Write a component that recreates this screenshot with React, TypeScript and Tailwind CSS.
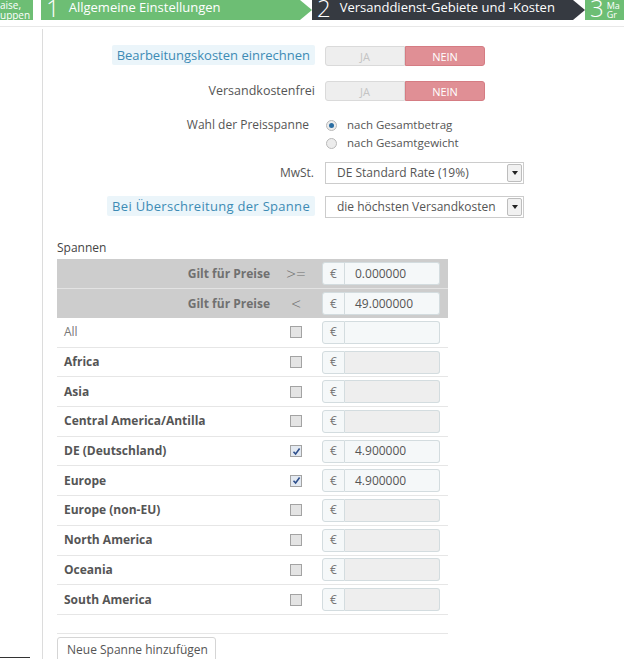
import React from "react";

const ZONES = [
  { name: "All", bold: false, checked: false, value: "", enabled: true },
  { name: "Africa", bold: true, checked: false, value: "", enabled: false },
  { name: "Asia", bold: true, checked: false, value: "", enabled: false },
  { name: "Central America/Antilla", bold: true, checked: false, value: "", enabled: false },
  { name: "DE (Deutschland)", bold: true, checked: true, value: "4.900000", enabled: true },
  { name: "Europe", bold: true, checked: true, value: "4.900000", enabled: true },
  { name: "Europe (non-EU)", bold: true, checked: false, value: "", enabled: false },
  { name: "North America", bold: true, checked: false, value: "", enabled: false },
  { name: "Oceania", bold: true, checked: false, value: "", enabled: false },
  { name: "South America", bold: true, checked: false, value: "", enabled: false },
];

function Toggle() {
  return (
    <div className="flex h-[20px] w-[160px] text-[11px] leading-none">
      <div className="flex w-1/2 items-center justify-center rounded-l-[3px] border border-[#dadada] bg-[#eeeeee] text-[#c4c4c4]">
        JA
      </div>
      <div className="flex w-1/2 items-center justify-center rounded-r-[3px] border border-[#d57c83] bg-[#e08f95] text-white">
        NEIN
      </div>
    </div>
  );
}

function Select({ value }: { value: string }) {
  return (
    <div className="flex h-[22px] w-[199px] border border-[#cccccc] bg-white text-[12px] text-[#555]">
      <div className="flex flex-1 items-center pl-[11px]">{value}</div>
      <div className="m-[1px] flex w-[15px] items-center justify-center rounded-[2px] border border-[#bdbdbd] bg-[#f1f1f1]">
        <div className="h-0 w-0 border-x-[3px] border-t-[4px] border-x-transparent border-t-[#222]" />
      </div>
    </div>
  );
}

function Radio({ checked }: { checked: boolean }) {
  return (
    <div className="flex h-[11px] w-[11px] items-center justify-center rounded-full border border-[#b9b9b9] bg-[#ececec]">
      {checked && <div className="h-[5px] w-[5px] rounded-full bg-[#2b6ea3]" />}
    </div>
  );
}

function Checkbox({ checked }: { checked: boolean }) {
  return (
    <div
      className={[
        "flex h-[12px] w-[12px] items-center justify-center border border-[#a3a3a3]",
        checked ? "bg-[#e3e9f1]" : "bg-[#e4e4e4]",
      ].join(" ")}
    >
      {checked && (
        <svg width="9" height="9" viewBox="0 0 9 9">
          <path d="M1.5 4.8 L3.6 7 L7.6 1.6" fill="none" stroke="#2e4f8c" strokeWidth="1.6" />
        </svg>
      )}
    </div>
  );
}

function PriceInput({ value, enabled }: { value: string; enabled: boolean }) {
  return (
    <div className="flex h-[23px] w-[118px] text-[12px]">
      <div className="flex w-[23px] items-center justify-center rounded-l-[3px] border border-[#d3dcdf] bg-[#f5f8f9] text-[#777]">
        €
      </div>
      <div
        className={[
          "flex flex-1 items-center rounded-r-[3px] border border-l-0 border-[#d3dcdf] pl-[10px] text-[#555]",
          enabled ? "bg-[#f5f8f9]" : "bg-[#eeeeee]",
        ].join(" ")}
      >
        {value}
      </div>
    </div>
  );
}

function Step({
  num,
  label,
  dark,
  width,
}: {
  num: string;
  label: string;
  dark?: boolean;
  width: string;
}) {
  const bg = dark ? "bg-[#363a41]" : "bg-[#6dbe74]";
  const arrow = dark ? "border-l-[#363a41]" : "border-l-[#6dbe74]";
  return (
    <div className="flex h-[20px]">
      <div className={`flex h-[20px] items-start ${bg} ${width}`}>
        <span className="pl-[5px] text-[24px] font-light leading-[16px]">{num}</span>
        <span className="pl-[9px] text-[13px] leading-[15px]">{label}</span>
      </div>
      <div className={`h-0 w-0 border-y-[10px] border-l-[12px] border-y-transparent ${arrow}`} />
    </div>
  );
}

export default function App() {
  return (
    <div className="relative h-[659px] w-[624px] overflow-hidden bg-white font-['Open_Sans',sans-serif] text-[12px] text-[#555]">
      {/* wizard steps */}
      <div className="flex h-[20px] text-white">
        <div className="h-[20px] w-[33px] shrink-0 overflow-hidden whitespace-nowrap bg-[#6dbe74] text-[10px] leading-[10px]">
          <div>aise,</div>
          <div>uppen</div>
        </div>
        <div className="ml-[8px] flex">
          <Step num="1" label="Allgemeine Einstellungen" width="w-[259px]" />
        </div>
        <Step num="2" label="Versanddienst-Gebiete und -Kosten" dark width="w-[261px]" />
        <div className="flex h-[20px] w-[60px] shrink-0 items-start bg-[#6dbe74]">
          <span className="pl-[5px] text-[24px] font-light leading-[16px]">3</span>
          <div className="pl-[3px] pt-[1px] text-[9px] leading-[9px]">
            <div>Ma</div>
            <div>Gr</div>
          </div>
        </div>
      </div>
      <div className="mt-[6px] h-px bg-[#e8e8e8]" />

      {/* panel */}
      <div className="ml-[42px] mt-[2px] h-[700px] border-l border-[#dcdcdc] pt-[17px]">
        <div className="flex items-center">
          <div className="w-[282px] pr-[10px] text-right">
            <span className="rounded-[2px] bg-[#ebf5fa] px-[5px] py-[1px] text-[13px] leading-[16px] text-[#3d8bb5]">
              Bearbeitungskosten einrechnen
            </span>
          </div>
          <Toggle />
        </div>

        <div className="mt-[15px] flex items-center">
          <div className="w-[282px] pr-[10px] text-right text-[12.5px]">Versandkostenfrei</div>
          <Toggle />
        </div>

        <div className="mt-[15px] flex">
          <div className="w-[282px] pr-[16px] text-right leading-[18px]">Wahl der Preisspanne</div>
          <div>
            <div className="flex h-[18px] items-center gap-[10px] pl-[1px] text-[11.5px]">
              <Radio checked />
              <span>nach Gesamtbetrag</span>
            </div>
            <div className="flex h-[18px] items-center gap-[10px] pl-[1px] text-[11.5px]">
              <Radio checked={false} />
              <span>nach Gesamtgewicht</span>
            </div>
          </div>
        </div>

        <div className="mt-[10px] flex items-center">
          <div className="w-[282px] pr-[11px] text-right">MwSt.</div>
          <Select value="DE Standard Rate (19%)" />
        </div>

        <div className="mt-[12px] flex items-center">
          <div className="w-[282px] pr-[10px] text-right">
            <span className="rounded-[2px] bg-[#ebf5fa] px-[5px] py-[1px] text-[13px] leading-[16px] tracking-[0.3px] text-[#3d8bb5]">
              Bei Überschreitung der Spanne
            </span>
          </div>
          <Select value="die höchsten Versandkosten" />
        </div>

        <div className="pl-[14px]">
          <div className="mt-[21px] mb-[3px] leading-[17px] text-[#444]">Spannen</div>

          <div className="w-[391px]">
            <div className="flex h-[30px] items-center border-b border-[#e3e3e3] bg-[#cdcdcd]">
              <div className="w-[223px] pr-[10px] text-right text-[12px] font-bold text-[#707070]">Gilt für Preise</div>
              <div className="w-[32px] text-center text-[17px] font-light leading-none text-[#707070]">&gt;=</div>
              <div className="pl-[10px]">
                <PriceInput value="0.000000" enabled />
              </div>
            </div>
            <div className="flex h-[29px] items-center bg-[#cdcdcd]">
              <div className="w-[223px] pr-[10px] text-right text-[12px] font-bold text-[#707070]">Gilt für Preise</div>
              <div className="w-[32px] text-center text-[17px] font-light leading-none text-[#707070]">&lt;</div>
              <div className="pl-[10px]">
                <PriceInput value="49.000000" enabled />
              </div>
            </div>

            {ZONES.map((z) => (
              <div key={z.name} className="flex h-[29.7px] items-center border-b border-[#e6e6e6]">
                <div
                  className={[
                    "w-[223px] pl-[7px] text-[12px]",
                    z.bold ? "font-bold text-[#555]" : "text-[#777]",
                  ].join(" ")}
                >
                  {z.name}
                </div>
                <div className="flex w-[32px] justify-center">
                  <Checkbox checked={z.checked} />
                </div>
                <div className="pl-[10px]">
                  <PriceInput value={z.value} enabled={z.enabled} />
                </div>
              </div>
            ))}

            <div className="h-[19px] border-b border-[#e6e6e6]" />
          </div>

          <button className="mt-[3px] h-[26px] w-[159px] rounded-[3px] border border-[#d5d5d5] bg-white text-left pl-[9px] text-[12px] text-[#555]">
            Neue Spanne hinzufügen
          </button>
        </div>
      </div>

      <div className="absolute bottom-[1px] left-0 h-px w-[30px] bg-[#333]" />
    </div>
  );
}
